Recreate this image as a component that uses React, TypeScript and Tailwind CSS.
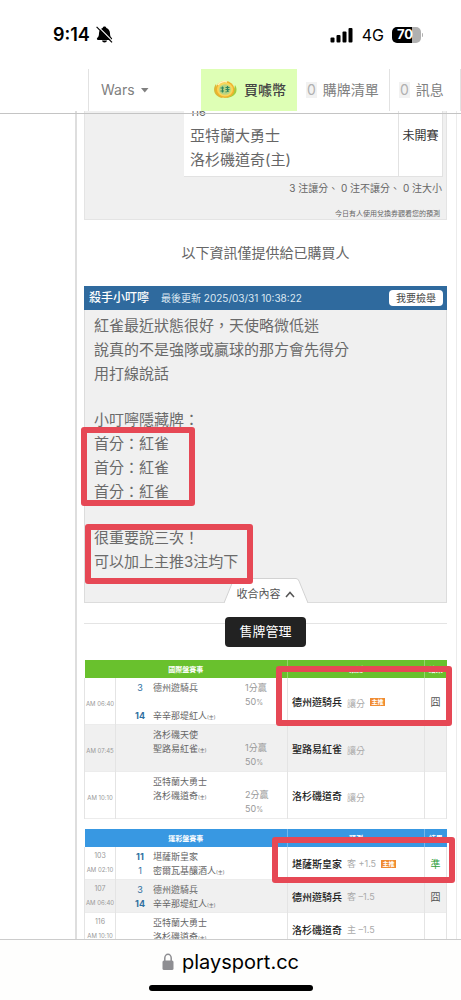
import React from "react";

interface Team {
  no?: string;
  name: string;
  home?: boolean;
  bold?: boolean;
}

interface Game {
  id?: string;
  time: string;
  // null keeps an empty line between the two teams
  teams: (Team | null)[];
  odds?: [string, string];
  oddsFirst?: boolean;
  pick: string;
  side: string;
  main?: boolean;
  result?: string;
  hit?: boolean;
}

const intlGames: Game[] = [
  {
    time: "AM 06:40",
    teams: [
      { no: "3", name: "德州遊騎兵" },
      null,
      { no: "14", name: "辛辛那堤紅人", home: true, bold: true },
    ],
    odds: ["1分贏", "50"],
    oddsFirst: true,
    pick: "德州遊騎兵",
    side: "讓分",
    main: true,
    result: "囧",
  },
  {
    time: "AM 07:45",
    teams: [{ name: "洛杉磯天使" }, { name: "聖路易紅雀", home: true }, null],
    odds: ["1分贏", "50"],
    pick: "聖路易紅雀",
    side: "讓分",
  },
  {
    time: "AM 10:10",
    teams: [{ name: "亞特蘭大勇士" }, { name: "洛杉磯道奇", home: true }, null],
    odds: ["2分贏", "50"],
    pick: "洛杉磯道奇",
    side: "讓分",
  },
];

const lotteryGames: Game[] = [
  {
    id: "103",
    time: "AM 02:10",
    teams: [
      { no: "11", name: "堪薩斯皇家", bold: true },
      { no: "1", name: "密爾瓦基釀酒人", home: true },
    ],
    pick: "堪薩斯皇家",
    side: "客 +1.5",
    main: true,
    result: "準",
    hit: true,
  },
  {
    id: "107",
    time: "AM 06:40",
    teams: [
      { no: "3", name: "德州遊騎兵" },
      { no: "14", name: "辛辛那堤紅人", home: true, bold: true },
    ],
    pick: "德州遊騎兵",
    side: "客 –1.5",
    result: "囧",
  },
  {
    id: "116",
    time: "AM 10:10",
    teams: [{ name: "亞特蘭大勇士" }, { name: "洛杉磯道奇", home: true }],
    pick: "洛杉磯道奇",
    side: "主 –1.5",
  },
];

const StatusBar: React.FC = () => (
  <div className="flex h-[69px] items-center justify-between pl-[53px] pr-[38px] text-black">
    <div className="flex items-center gap-1.5">
      <span className="text-lg font-semibold">9:14</span>
      <svg width="17" height="17" viewBox="0 0 17 17" aria-hidden="true">
        <path
          d="M8.500 0.500C7.400 0.500 6.800 1.200 6.600 2C4.500 2.800 3 4.700 3 7.200C3 9.900 2.300 10.900 1.300 11.800C.5 12.600 .9 13.900 2 13.900H15C16.100 13.900 16.500 12.600 15.700 11.800C14.700 10.900 14 9.900 14 7.200C14 4.700 12.500 2.800 10.400 2C10.200 1.200 9.600 0.500 8.500 0.500Z"
          fill="#000"
        />
        <path d="M6 14.600H11C10.800 15.900 9.800 16.600 8.500 16.600S6.200 15.900 6 14.600Z" fill="#000" />
        <path d="M1.700 0.200L17 15.500" stroke="#fff" strokeWidth="1.200" />
        <path d="M0.600 0.900L16 16.300" stroke="#000" strokeWidth="1.200" />
      </svg>
    </div>
    <div className="flex items-center gap-2">
      <svg width="24" height="16" viewBox="0 0 24 16" aria-hidden="true">
        <rect x="0.500" y="10.500" width="4" height="5" rx="1" />
        <rect x="6.500" y="8" width="4" height="7.500" rx="1" />
        <rect x="12.500" y="4.500" width="4" height="11" rx="1" />
        <rect x="18.500" y="1" width="4" height="14.500" rx="1" />
      </svg>
      <span className="text-base">4G</span>
      <div className="flex items-center gap-px">
        <div className="flex h-4 w-[29px] items-center overflow-hidden rounded-[5px] bg-gradient-to-r from-black from-70% to-[#b0b0b0] to-70% pl-[5px] text-[13px] font-bold text-white">
          70
        </div>
        <div className="h-1 w-px rounded-r bg-[#b0b0b0]" />
      </div>
    </div>
  </div>
);

const Coin: React.FC = () => (
  <svg width="24" height="20" viewBox="0 0 24 20" aria-hidden="true">
    <path d="M3 4C-1 9 1 17 10 18c-4-3-6-8-7-14z" fill="#d8b93a" />
    <path d="M22 5c4 6 0 13-10 13 5-2 9-6 10-13z" fill="#a5cc3e" />
    <ellipse cx="12" cy="9.500" rx="9.500" ry="8.500" fill="#efb22c" />
    <ellipse cx="12" cy="9.500" rx="8" ry="7" fill="#f9d65a" />
    <ellipse cx="12" cy="9.500" rx="6" ry="5.300" fill="#b9d482" />
    <path
      d="M7.500 8h3.500M7.500 11h3.500M9.500 6.500v6M12.500 7.500h4M12.500 9.500h4M12.500 12l3.500-1M14.500 6v6"
      stroke="#2f8560"
      strokeWidth="1.200"
    />
    <path d="M5 5c2-3 6-4 9-3" stroke="#fff4b8" strokeWidth="1.500" fill="none" />
  </svg>
);

const Nav: React.FC = () => (
  <nav className="flex h-[42px] items-stretch pl-[88px] text-sm text-[#808080]">
    <button className="flex flex-1 items-center gap-1.5 border-l border-[#e2e2e2] pl-3">
      Wars
      <svg width="8" height="5" viewBox="0 0 8 5" aria-hidden="true">
        <path d="M0 0h7.500L3.800 4.500z" fill="#808080" />
      </svg>
    </button>
    <a
      href="#coin"
      className="flex w-24 items-center gap-[7px] bg-[#deffb5] pl-3 font-medium text-[#444]"
    >
      <Coin />
      買噱幣
    </a>
    <a href="#cart" className="flex w-[93px] items-center gap-1.5 border-r border-[#e2e2e2] pl-[9px]">
      <span className="bg-[#f2f2f2] px-px leading-4 text-[#b0b0b0]">0</span>
      購牌清單
    </a>
    <a href="#message" className="flex w-[71px] items-center gap-1.5 border-r border-[#e2e2e2] pl-[9px]">
      <span className="bg-[#f2f2f2] px-px leading-4 text-[#b0b0b0]">0</span>
      訊息
    </a>
  </nav>
);

const Summary: React.FC = () => (
  <section className="border-x border-b border-[#e4e4e4] bg-[#f0f0f0] text-[#666]">
    <div className="ml-[99px] mr-[3px] flex h-[66px] border-b border-r border-[#e2e2e2] bg-white">
      <div className="flex-1 pl-1.5 text-[15px] leading-6">
        <div className="flex h-[13px] items-end pb-1.5 text-[11px] leading-none">116</div>
        <div>亞特蘭大勇士</div>
        <div>洛杉磯道奇(主)</div>
      </div>
      <div className="flex w-[44px] items-center justify-center border-l border-[#e2e2e2] pb-4 text-xs text-[#333]">
        未開賽
      </div>
    </div>
    <p className="mr-1 text-right text-[10px] leading-[22px]">3 注讓分、 0 注不讓分、 0 注大小</p>
    <p className="mr-1.5 mt-[10px] text-right text-[7px] leading-[10px]">
      今日有人使用兌換券觀看您的預測
    </p>
  </section>
);

const Highlight: React.FC<{ className: string }> = ({ className }) => (
  <span
    className={`pointer-events-none absolute z-10 rounded-[3px] border-[6px] border-[#e64855] ${className}`}
  />
);

const Message: React.FC = () => (
  <article>
    <header className="flex h-6 items-center bg-[#2f6a9e] pl-[5px] pr-1 text-white">
      <h2 className="text-xs font-medium">殺手小叮嚀</h2>
      <time className="ml-3 flex-1 text-[10px] text-[#dce8f2]">最後更新 2025/03/31 10:38:22</time>
      <button className="h-4 rounded-sm bg-white px-[7px] text-[10px] leading-4 text-[#444]">
        我要檢舉
      </button>
    </header>
    <div className="border-x border-b border-[#dcdcdc] bg-[#f0f0f0] pt-1">
      <div className="space-y-[22px] pl-[9px] text-[15px] leading-6 text-[#6a6a6a]">
        <p>
          紅雀最近狀態很好，天使略微低迷
          <br />
          說真的不是強隊或贏球的那方會先得分
          <br />
          用打線說話
        </p>
        <div>
          小叮嚀隱藏牌：
          <div className="relative">
            首分：紅雀
            <br />
            首分：紅雀
            <br />
            首分：紅雀
            <Highlight className="-left-[13px] -top-[5px] h-[79px] w-[114px]" />
          </div>
        </div>
        <p className="relative">
          很重要說三次！
          <br />
          可以加上主推3注均下
          <Highlight className="-left-[9px] -top-[2px] h-[60px] w-[168px]" />
        </p>
      </div>
      <div className="mt-1 flex justify-center">
        <button className="relative h-6 w-[84px] pt-1 text-[11px] leading-6 text-[#555]">
          <svg
            className="absolute inset-0"
            width="84"
            height="25"
            viewBox="0 0 84 25"
            aria-hidden="true"
          >
            <path d="M0 25L9 3q1-2.500 3-2.500h60q2 0 3 2.500l9 22" fill="#fff" stroke="#d2d2d2" />
          </svg>
          <span className="relative flex items-center justify-center gap-1">
            收合內容
            <svg width="10" height="7" viewBox="0 0 10 7" aria-hidden="true">
              <path d="M1 6l4-4.500L9 6" fill="none" stroke="#555" strokeWidth="1.500" />
            </svg>
          </span>
        </button>
      </div>
    </div>
  </article>
);

interface GameTableProps {
  title: string;
  headClass: string;
  markClass: string;
  games: Game[];
}

const GameTable: React.FC<GameTableProps> = ({ title, headClass, markClass, games }) => (
  <table className="w-full table-fixed border-collapse text-[9px] leading-[14px] text-[#666]">
    <colgroup>
      <col className="w-[31px]" />
      <col />
      <col className="w-[137px]" />
      <col className="w-[22px]" />
    </colgroup>
    <thead>
      <tr className={`h-[18px] text-[7px] leading-none font-bold text-white ${headClass}`}>
        <th colSpan={2}>{title}</th>
        <th className="border-l border-white/30">預測</th>
        <th className="border-l border-white/30">結果</th>
      </tr>
    </thead>
    <tbody>
      {games.map((game) => (
        <tr key={game.time} className="border-b border-[#ececec] odd:bg-white even:bg-[#f0f0f0]">
          <td
            className={`border-x border-[#e4e4e4] text-center text-[6px] text-[#999] ${
              game.id ? "" : "pt-1.5"
            }`}
          >
            {game.id && <div className="text-[7px]">{game.id}</div>}
            <div>{game.time}</div>
          </td>
          <td className="pt-[3px] pb-px">
            <div className="flex">
              <div className="flex-1 pl-[14px]">
                {game.teams.map((team, i) => (
                  <div key={i} className="flex h-[14px] gap-[3px] whitespace-nowrap">
                    <span
                      className={`w-5 text-center text-[#2f6f9f] ${team?.bold ? "font-bold" : ""}`}
                    >
                      {team?.no}
                    </span>
                    <span>
                      {team?.name}
                      {team?.home && <small className="text-[5px]">(主)</small>}
                    </span>
                  </div>
                ))}
              </div>
              {game.odds && (
                <div
                  className={`w-[42px] text-[#999] ${game.oddsFirst ? "self-start" : "self-end"}`}
                >
                  <div>{game.odds[0]}</div>
                  <div>
                    {game.odds[1]}
                    <span className="text-[7px]">%</span>
                  </div>
                </div>
              )}
            </div>
          </td>
          <td className="relative border-l border-[#e4e4e4] pt-0.5 pl-1">
            <div className="flex items-center gap-[5px]">
              <b className="text-[10px] font-medium text-[#222]">{game.pick}</b>
              <span className={`text-[#aaa] ${game.odds ? "pt-1" : ""}`}>{game.side}</span>
              {game.main && (
                <span className="h-2 w-[15px] bg-[#f08c32] text-center text-[6px] leading-[8px] font-bold text-white">
                  主推
                </span>
              )}
            </div>
            {game.main && <Highlight className={markClass} />}
          </td>
          <td
            className={`border-x border-[#e4e4e4] pt-0.5 text-center text-[10px] ${
              game.hit ? "text-[#2f9e3a]" : "text-[#555]"
            }`}
          >
            {game.result}
          </td>
        </tr>
      ))}
    </tbody>
  </table>
);

const App: React.FC = () => {
  return (
    <div
      lang="zh-Hant"
      className="flex h-screen flex-col overflow-hidden bg-white font-['Inter','Noto_Sans_CJK_TC',sans-serif]"
    >
      <header className="relative">
        <StatusBar />
        <Nav />
        <div className="absolute inset-x-0 top-full z-20 h-[3px] border-b border-[#c4c4c4]" />
      </header>

      <main className="min-h-0 flex-1 overflow-hidden">
        <div className="ml-[75px] mr-1 border-l-2 border-r border-l-[#dedede] border-r-[#ececec] pl-[7px] pr-[9px]">
          <Summary />

          <p className="mb-[21px] mt-[21px] text-center text-sm leading-6 text-[#666]">
            以下資訊僅提供給已購買人
          </p>

          <Message />

          <div className="relative mb-[13px] mt-[14px] text-center">
            <hr className="absolute inset-x-0 top-1.5 border-[#e4e4e4]" />
            <button className="relative mx-auto block h-[30px] rounded bg-[#222] px-[14px] text-[13px] text-white">
              售牌管理
            </button>
          </div>

          <div className="space-y-[10px]">
            <GameTable
              title="國際盤賽事"
              headClass="bg-[#69c12d]"
              markClass="-left-3 -right-[28px] -top-3 -bottom-0.5"
              games={intlGames}
            />
            <GameTable
              title="運彩盤賽事"
              headClass="bg-[#3898e2]"
              markClass="-left-4 -right-[31px] -top-2.5 -bottom-1"
              games={lotteryGames}
            />
          </div>
        </div>
      </main>

      <footer className="flex h-[61px] flex-col items-center justify-between border-t border-[#ccc] bg-[#fefefd] pb-[9px] pt-2 text-black">
        <div className="flex items-center gap-2 text-xl leading-7">
          <svg width="12" height="18" viewBox="0 0 12 18" aria-hidden="true">
            <rect x="0.500" y="7.500" width="11" height="9.500" rx="1.500" fill="#8e8e92" />
            <path
              d="M2.800 8V5a3.200 3.700 0 0 1 6.400 0v3"
              fill="none"
              stroke="#8e8e92"
              strokeWidth="1.500"
            />
          </svg>
          playsport.cc
        </div>
        <div className="h-1.5 w-[164px] rounded-full bg-black" />
      </footer>
    </div>
  );
};

export default App;
